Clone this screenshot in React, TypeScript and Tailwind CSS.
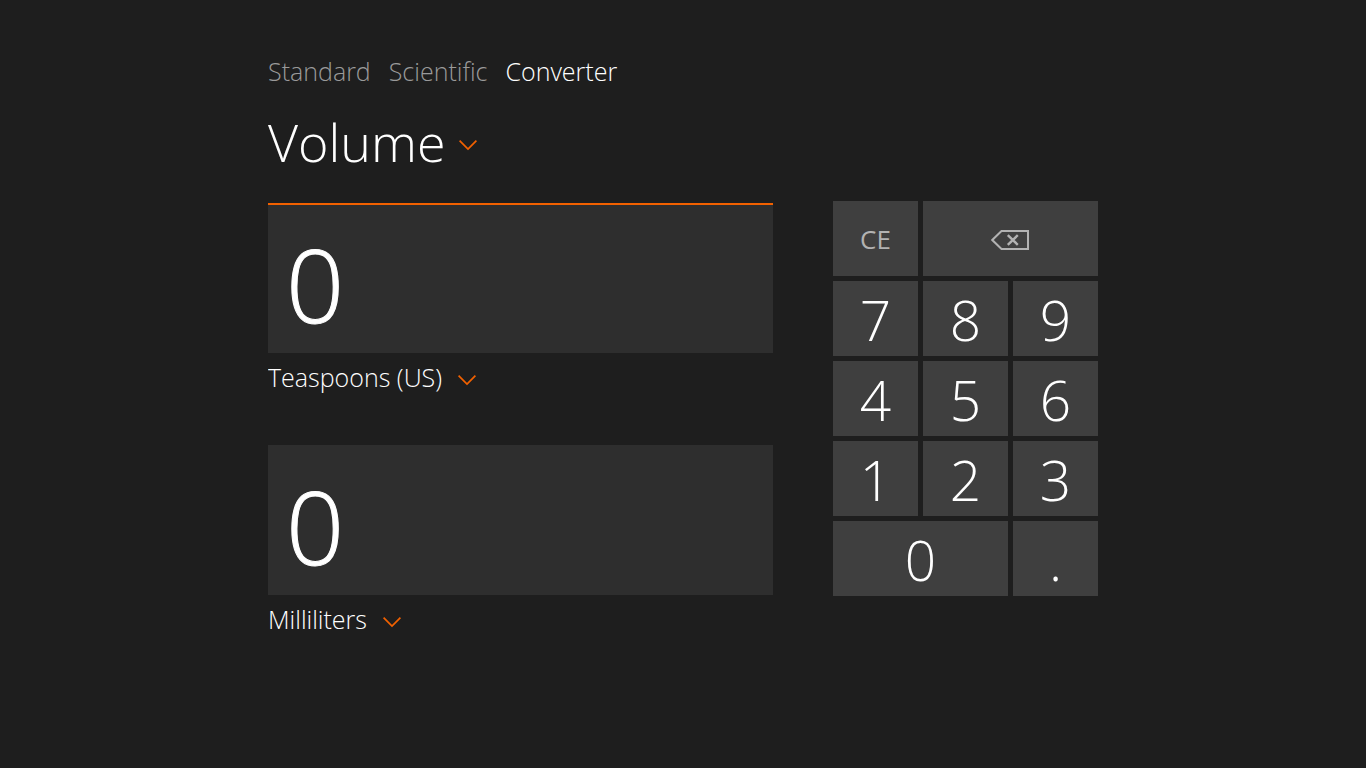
import { useState } from "react";
import clsx from "clsx";

const MODES = ["Standard", "Scientific", "Converter"];
const CATEGORIES = ["Volume", "Length", "Weight", "Temperature", "Energy", "Area", "Speed", "Time"];
const UNITS = ["Teaspoons (US)", "Milliliters", "Tablespoons (US)", "Cups (US)", "Liters", "Gallons (US)"];

function Chevron() {
  return (
    <svg
      className="pointer-events-none absolute right-0 top-1/2 -mt-1 h-[14px] w-[18px]"
      viewBox="0 0 18 14"
      fill="none"
      stroke="#f26100"
      strokeWidth="1.7"
      aria-hidden="true"
    >
      <path d="M0.6 2.6 9 11 17.4 2.6" />
    </svg>
  );
}

type PickerProps = {
  label: string;
  value: string;
  options: string[];
  onChange: (value: string) => void;
  large?: boolean;
};

function Picker({ label, value, options, onChange, large }: PickerProps) {
  return (
    <div className="relative w-fit">
      <select
        aria-label={label}
        value={value}
        onChange={(e) => onChange(e.target.value)}
        className={clsx(
          "block cursor-pointer appearance-none bg-transparent font-light text-white outline-none [field-sizing:content]",
          large ? "h-20 pr-8 text-[52px] leading-[80px]" : "h-10 pr-[34px] text-[25px] leading-10",
        )}
      >
        {options.map((o) => (
          <option key={o} className="bg-[#2e2e2e] text-base">
            {o}
          </option>
        ))}
      </select>
      <Chevron />
    </div>
  );
}

function ValueBox({ label, value, active }: { label: string; value: string; active?: boolean }) {
  return (
    <input
      type="text"
      readOnly
      aria-label={label}
      value={value}
      className={clsx(
        "block h-[150px] w-full border-t-2 bg-[#2e2e2e] px-[18px] pt-2 text-[102px] font-light text-white outline-none [-webkit-text-stroke:1px_white]",
        active ? "border-[#f26100]" : "border-[#2e2e2e]",
      )}
    />
  );
}

function BackspaceIcon() {
  return (
    <svg className="h-5 w-10" viewBox="0 0 40 20" fill="none" stroke="#b2b2b2" strokeWidth="2" aria-hidden="true">
      <path d="M10.5 1H37v18H10.5L1.3 10z" />
      <path d="M16.8 5.2l10 9.6M26.8 5.2l-10 9.6" strokeWidth="2.4" />
    </svg>
  );
}

const KEYS = ["7", "8", "9", "4", "5", "6", "1", "2", "3", "0", "."];

export default function App() {
  const [mode, setMode] = useState("Converter");
  const [category, setCategory] = useState("Volume");
  const [from, setFrom] = useState("Teaspoons (US)");
  const [to, setTo] = useState("Milliliters");
  const [entry, setEntry] = useState("0");

  const press = (key: string) =>
    setEntry((v) => (key === "." ? (v.includes(".") ? v : v + key) : v === "0" ? key : v + key));

  return (
    <div className="min-h-screen bg-[#1e1e1e] px-4 pt-12 pb-8 font-['Open_Sans','Noto_Sans',sans-serif] font-light text-white">
      <main className="mx-auto max-w-[830px]">
        <nav className="flex gap-[18px] text-[25px] leading-[46px]" aria-label="Mode">
          {MODES.map((m) => (
            <button
              key={m}
              type="button"
              onClick={() => setMode(m)}
              className={clsx("cursor-pointer", m === mode ? "text-white" : "text-[#9a9a9a]")}
            >
              {m}
            </button>
          ))}
        </nav>
        <div className="mt-2">
          <Picker label="Category" value={category} options={CATEGORIES} onChange={setCategory} large />
        </div>

        <div className="mt-[19px] flex flex-wrap items-start gap-[60px]">
          <section className="min-w-0 flex-1 pt-0.5">
            <ValueBox label="From value" value={entry} active />
            <div className="mt-1">
              <Picker label="From unit" value={from} options={UNITS} onChange={setFrom} />
            </div>
            <div className="mt-12">
              <ValueBox label="To value" value="0" />
            </div>
            <div className="mt-1">
              <Picker label="To unit" value={to} options={UNITS} onChange={setTo} />
            </div>
          </section>

          <section className="grid w-[265px] auto-rows-[75px] grid-cols-3 gap-[5px]" aria-label="Keypad">
            <button
              type="button"
              onClick={() => setEntry("0")}
              className="cursor-pointer bg-[#3f3f3f] pt-0.5 text-[26px] font-normal text-[#b2b2b2]"
            >
              CE
            </button>
            <button
              type="button"
              aria-label="Backspace"
              onClick={() => setEntry((v) => v.slice(0, -1) || "0")}
              className="col-span-2 flex cursor-pointer items-center justify-center bg-[#3f3f3f] pt-0.5"
            >
              <BackspaceIcon />
            </button>
            {KEYS.map((k) => (
              <button
                key={k}
                type="button"
                onClick={() => press(k)}
                className={clsx("cursor-pointer bg-[#3f3f3f] pt-0.5 text-[55px] leading-[73px]", k === "0" && "col-span-2")}
              >
                {k}
              </button>
            ))}
          </section>
        </div>
      </main>
    </div>
  );
}
